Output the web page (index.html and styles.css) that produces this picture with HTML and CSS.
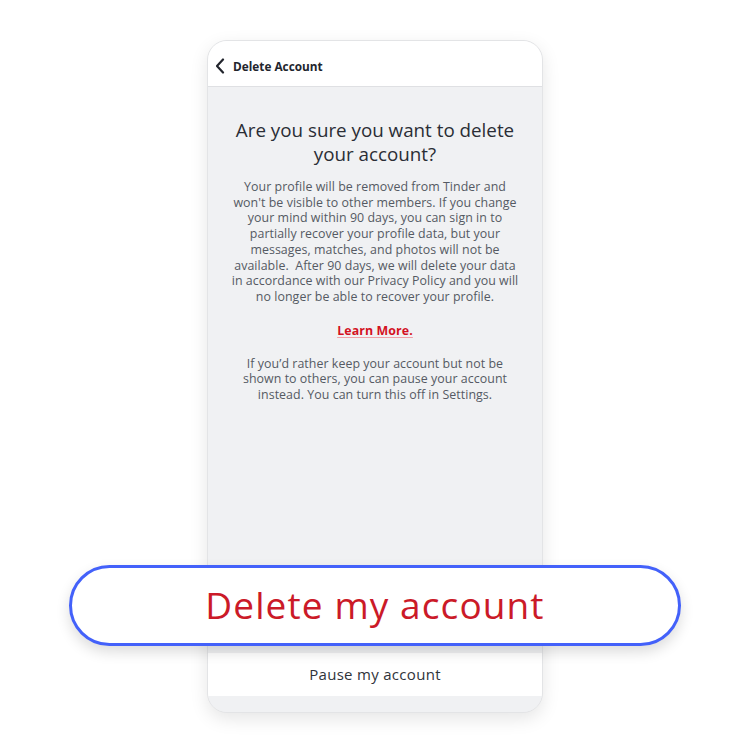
FILE: index.html
```html
<!DOCTYPE html>
<html>
<head>
<meta charset="utf-8">
<link rel="stylesheet" href="styles.css">
</head>
<body>
<div class="stage">
  <div class="phone">
    <div class="header">
      <svg class="back" width="10" height="16" viewBox="0 0 10 16"><path d="M8 1.5 L2 8 L8 14.5" fill="none" stroke="#22252d" stroke-width="2.2" stroke-linecap="round" stroke-linejoin="round"/></svg>
      <span class="htitle">Delete Account</span>
    </div>
    <div class="content">
      <h1 class="title">Are you sure you want to delete<br>your account?</h1>
      <p class="body">Your profile will be removed from Tinder and<br>won't be visible to other members. If you change<br>your mind within 90 days, you can sign in to<br>partially recover your profile data, but your<br>messages, matches, and photos will not be<br>available.&nbsp; After 90 days, we will delete your data<br>in accordance with our Privacy Policy and you will<br>no longer be able to recover your profile.</p>
      <a class="learn">Learn More.</a>
      <p class="body second">If you’d rather keep your account but not be<br>shown to others, you can pause your account<br>instead. You can turn this off in Settings.</p>
    </div>
    <div class="pause">Pause my account</div>
    <div class="foot"></div>
  </div>
  <div class="delete-btn">Delete my account</div>
</div>
</body>
</html>
```
FILE: styles.css
```css
* { box-sizing: border-box; }
html, body { margin: 0; padding: 0; background: #fff; }
body { font-family: "Open Sans", "Lato", sans-serif; width: 750px; height: 753px; overflow: hidden; }
.stage { position: relative; width: 750px; height: 753px; padding-top: 40px; }
.phone {
  width: 336px; height: 673px; margin: 0 auto 0 207px;
  border: 1px solid #e3e4e6; border-radius: 20px; overflow: hidden;
  display: flex; flex-direction: column; background: #f0f1f3;
  box-shadow: 0 6px 18px rgba(0,0,0,0.10);
}
.header {
  height: 46px; flex: none; background: #fff; border-bottom: 1px solid #dfe0e3;
  display: flex; align-items: center; padding-left: 7px; gap: 8px; padding-top: 5px;
}
.back { display: block; }
.htitle { font-size: 11.8px; font-weight: 700; color: #22252d; letter-spacing: 0px; }
.content { flex: 1; display: flex; flex-direction: column; align-items: center; padding: 31px 0 0; }
.title { margin: 0; font-size: 18.8px; font-weight: 400; line-height: 24px; color: #2a2d35; text-align: center; white-space: nowrap; letter-spacing: 0px; }
.body { margin: 13px 0 0; font-size: 12.4px; line-height: 15.7px; color: #555a63; text-align: center; white-space: nowrap; letter-spacing: 0.05px; }
.learn { margin-top: 17px; font-size: 12.4px; font-weight: 700; color: #d3111f; text-decoration: underline; text-decoration-color: #f0a0a6; text-underline-offset: 2px; letter-spacing: 0.1px; }
.second { margin-top: 17px; }
.pause { height: 43px; flex: none; background: #fff; display: flex; align-items: center; justify-content: center; font-size: 15px; color: #30333a; letter-spacing: 0.3px; padding-bottom: 1px; }
.foot { height: 16px; flex: none; background: #f0f1f3; }
.delete-btn {
  position: absolute; left: 69px; top: 565px; width: 612px; height: 81px;
  border: 3.5px solid #4361fa; border-radius: 41px; background: #fff;
  display: flex; align-items: center; justify-content: center; padding-bottom: 3px;
  font-size: 37px; color: #cb1a28; letter-spacing: 1.1px;
  box-shadow: 0 6px 14px rgba(0,0,0,0.14);
}
```
